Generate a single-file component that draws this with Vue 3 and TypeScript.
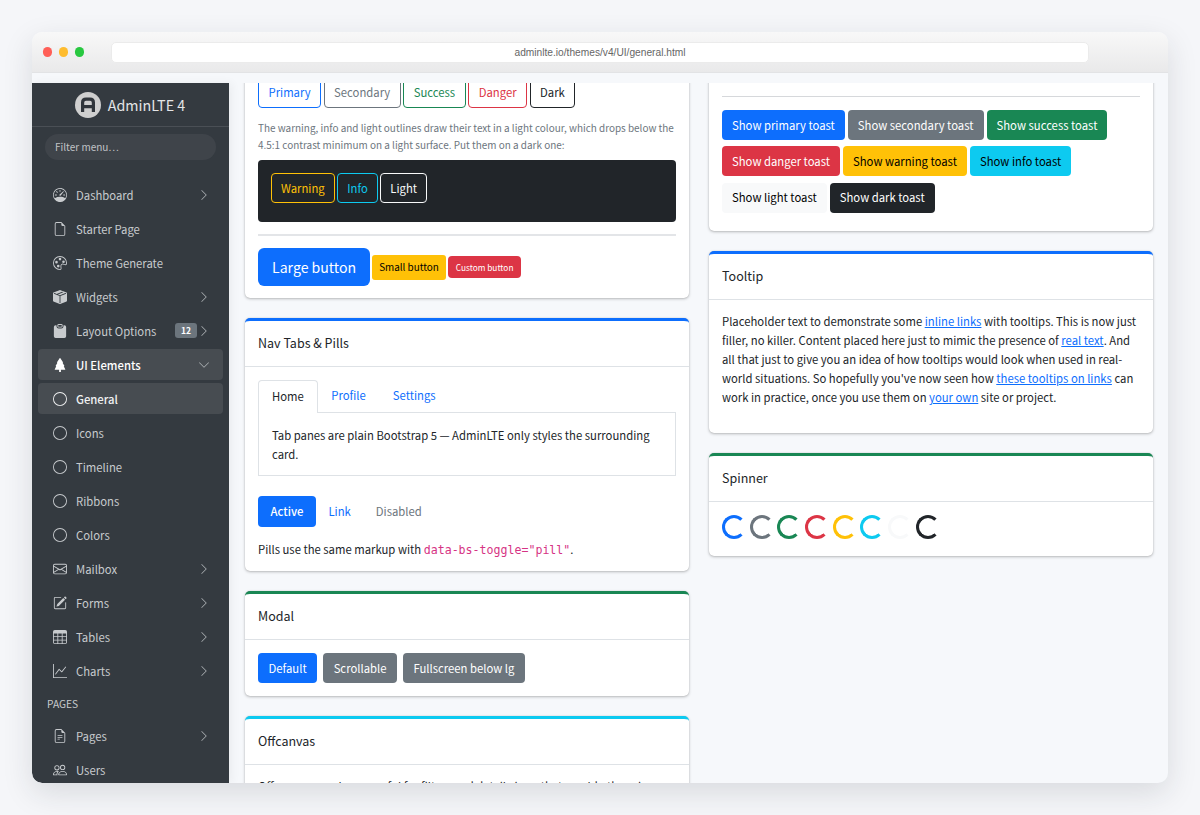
<script setup lang="ts">
const P = {
  speed: ['M8 2a.5.5 0 0 1 .5.5V4a.5.5 0 0 1-1 0V2.5A.5.5 0 0 1 8 2zM3.732 3.732a.5.5 0 0 1 .707 0l.915.914a.5.5 0 1 1-.708.708l-.914-.915a.5.5 0 0 1 0-.707zM2 8a.5.5 0 0 1 .5-.5h1.586a.5.5 0 0 1 0 1H2.5A.5.5 0 0 1 2 8zm9.5 0a.5.5 0 0 1 .5-.5h1.5a.5.5 0 0 1 0 1H12a.5.5 0 0 1-.5-.5zm.754-4.246a.389.389 0 0 0-.527-.02L7.547 7.31A.91.91 0 1 0 8.85 8.569l3.434-4.297a.389.389 0 0 0-.029-.518z', 'M6.664 15.889A8 8 0 1 1 9.336.11a8 8 0 0 1-2.672 15.78zm-4.665-4.283A11.945 11.945 0 0 1 8 10c2.186 0 4.236.585 6.001 1.606a7 7 0 1 0-12.002 0z'],
  file: ['M14 4.5V14a2 2 0 0 1-2 2H4a2 2 0 0 1-2-2V2a2 2 0 0 1 2-2h5.5L14 4.5zm-3 0A1.5 1.5 0 0 1 9.5 3V1H4a1 1 0 0 0-1 1v12a1 1 0 0 0 1 1h8a1 1 0 0 0 1-1V4.5h-2z'],
  palette: ['M8 5a1.5 1.5 0 1 0 0-3 1.5 1.5 0 0 0 0 3zm4 3a1.5 1.5 0 1 0 0-3 1.5 1.5 0 0 0 0 3zM5.5 7a1.5 1.5 0 1 1-3 0 1.5 1.5 0 0 1 3 0zm.5 6a1.5 1.5 0 1 0 0-3 1.5 1.5 0 0 0 0 3z', 'M16 8c0 3.15-1.866 2.585-3.567 2.07C11.42 9.763 10.465 9.473 10 10c-.603.683-.475 1.819-.351 2.92C9.826 14.495 9.996 16 8 16a8 8 0 1 1 8-8zm-8 7c.611 0 .654-.171.655-.176.078-.146.124-.464.07-1.119-.014-.168-.037-.37-.061-.591-.052-.464-.112-1.005-.118-1.462-.01-.707.083-1.61.704-2.314.369-.417.845-.578 1.272-.618.404-.038.812.026 1.16.104.343.077.702.186 1.025.284l.028.008c.346.105.658.199.953.266.653.148.904.083.991.024C14.717 9.38 15 9.161 15 8a7 7 0 1 0-7 7z'],
  box: ['M15.528 2.973a.75.75 0 0 1 .472.696v8.662a.75.75 0 0 1-.472.696l-7.25 2.9a.75.75 0 0 1-.557 0l-7.25-2.9A.75.75 0 0 1 0 12.331V3.669a.75.75 0 0 1 .471-.696L7.443.184l.01-.003.268-.108a.75.75 0 0 1 .558 0l.269.108.01.003 6.97 2.789ZM10.404 2 4.25 4.461 1.846 3.5 1 3.839v.4l6.5 2.6v7.922l.5.2.5-.2V6.84l6.5-2.6v-.4l-.846-.339L8 5.961 5.596 5l6.154-2.461L10.404 2Z'],
  clip: ['M10 1.5a.5.5 0 0 0-.5-.5h-3a.5.5 0 0 0-.5.5v1a.5.5 0 0 0 .5.5h3a.5.5 0 0 0 .5-.5v-1Zm-5 0A1.5 1.5 0 0 1 6.5 0h3A1.5 1.5 0 0 1 11 1.5v1A1.5 1.5 0 0 1 9.5 4h-3A1.5 1.5 0 0 1 5 2.5v-1Zm-2 0h1v1A2.5 2.5 0 0 0 6.5 5h3A2.5 2.5 0 0 0 12 2.5v-1h1a2 2 0 0 1 2 2V14a2 2 0 0 1-2 2H3a2 2 0 0 1-2-2V3.5a2 2 0 0 1 2-2Z'],
  tree: ['M8.416.223a.5.5 0 0 0-.832 0l-3 4.5A.5.5 0 0 0 5 5.5h.098L3.076 8.735A.5.5 0 0 0 3.5 9.5h.191l-1.638 3.276a.5.5 0 0 0 .447.724H7V16h2v-2.5h4.5a.5.5 0 0 0 .447-.724L12.31 9.5h.191a.5.5 0 0 0 .424-.765L10.902 5.5H11a.5.5 0 0 0 .416-.777l-3-4.5z'],
  circle: ['M8 15A7 7 0 1 1 8 1a7 7 0 0 1 0 14zm0 1A8 8 0 1 0 8 0a8 8 0 0 0 0 16z'],
  mail: ['M0 4a2 2 0 0 1 2-2h12a2 2 0 0 1 2 2v8a2 2 0 0 1-2 2H2a2 2 0 0 1-2-2V4Zm2-1a1 1 0 0 0-1 1v.217l7 4.2 7-4.2V4a1 1 0 0 0-1-1H2Zm13 2.383-4.708 2.825L15 11.105V5.383Zm-.034 6.876-5.64-3.471L8 9.583l-1.326-.795-5.64 3.47A1 1 0 0 0 2 13h12a1 1 0 0 0 .966-.741ZM1 11.105l4.708-2.897L1 5.383v5.722Z'],
  pencil: ['M15.502 1.94a.5.5 0 0 1 0 .706L14.459 3.69l-2-2L13.502.646a.5.5 0 0 1 .707 0l1.293 1.293zm-1.75 2.456-2-2L4.939 9.21a.5.5 0 0 0-.121.196l-.805 2.414a.25.25 0 0 0 .316.316l2.414-.805a.5.5 0 0 0 .196-.12l6.813-6.814z', 'M1 13.5A1.5 1.5 0 0 0 2.5 15h11a1.5 1.5 0 0 0 1.5-1.5v-6a.5.5 0 0 0-1 0v6a.5.5 0 0 1-.5.5h-11a.5.5 0 0 1-.5-.5v-11a.5.5 0 0 1 .5-.5H9a.5.5 0 0 0 0-1H2.5A1.5 1.5 0 0 0 1 2.5v11z'],
  table: ['M0 2a2 2 0 0 1 2-2h12a2 2 0 0 1 2 2v12a2 2 0 0 1-2 2H2a2 2 0 0 1-2-2V2zm15 2h-4v3h4V4zm0 4h-4v3h4V8zm0 4h-4v3h3a1 1 0 0 0 1-1v-2zm-5 3v-3H6v3h4zm-5 0v-3H1v2a1 1 0 0 0 1 1h3zm-4-4h4V8H1v3zm0-4h4V4H1v3zm5-3v3h4V4H6zm4 4H6v3h4V8z'],
  graph: ['M0 0h1v15h15v1H0V0Zm14.817 3.113a.5.5 0 0 1 .07.704l-4.5 5.5a.5.5 0 0 1-.74.037L7.06 6.767l-3.656 5.027a.5.5 0 0 1-.808-.588l4-5.5a.5.5 0 0 1 .758-.06l2.609 2.61 4.15-5.073a.5.5 0 0 1 .704-.07Z'],
  text: ['M5.5 7a.5.5 0 0 0 0 1h5a.5.5 0 0 0 0-1h-5zM5 9.5a.5.5 0 0 1 .5-.5h5a.5.5 0 0 1 0 1h-5a.5.5 0 0 1-.5-.5zm0 2a.5.5 0 0 1 .5-.5h2a.5.5 0 0 1 0 1h-2a.5.5 0 0 1-.5-.5z', 'M14 4.5V14a2 2 0 0 1-2 2H4a2 2 0 0 1-2-2V2a2 2 0 0 1 2-2h5.5L14 4.5zm-3 0A1.5 1.5 0 0 1 9.5 3V1H4a1 1 0 0 0-1 1v12a1 1 0 0 0 1 1h8a1 1 0 0 0 1-1V4.5h-2z'],
  people: ['M15 14s1 0 1-1-1-4-5-4-5 3-5 4 1 1 1 1h8Zm-7.978-1A.261.261 0 0 1 7 12.996c.001-.264.167-1.03.76-1.72C8.312 10.629 9.282 10 11 10c1.717 0 2.687.63 3.24 1.276.593.69.758 1.457.76 1.72l-.008.002a.274.274 0 0 1-.014.002H7.022ZM11 7a2 2 0 1 0 0-4 2 2 0 0 0 0 4Zm3-2a3 3 0 1 1-6 0 3 3 0 0 1 6 0ZM6.936 9.28a5.88 5.88 0 0 0-1.23-.247A7.35 7.35 0 0 0 5 9c-4 0-5 3-5 4 0 .667.333 1 1 1h4.216A2.238 2.238 0 0 1 5 13c0-1.01.377-2.042 1.09-2.904.243-.294.526-.569.846-.816ZM4.92 10A5.493 5.493 0 0 0 4 13H1c0-.26.164-1.03.76-1.724.545-.636 1.492-1.256 3.16-1.275ZM1.5 5.5a3 3 0 1 1 6 0 3 3 0 0 1-6 0Zm3-2a2 2 0 1 0 0 4 2 2 0 0 0 0-4Z'],
}
const chevR = 'M4.646 1.646a.5.5 0 0 1 .708 0l6 6a.5.5 0 0 1 0 .708l-6 6a.5.5 0 0 1-.708-.708L10.293 8 4.646 2.354a.5.5 0 0 1 0-.708z'
const chevD = 'M1.646 4.646a.5.5 0 0 1 .708 0L8 10.293l5.646-5.647a.5.5 0 0 1 .708.708l-6 6a.5.5 0 0 1-.708 0l-6-6a.5.5 0 0 1 0-.708z'

type Item = { label: string; icon?: string[]; chev?: 'r' | 'd'; badge?: string; open?: boolean; active?: boolean; header?: boolean }
const menu: Item[] = [
  { label: 'Dashboard', icon: P.speed, chev: 'r' },
  { label: 'Starter Page', icon: P.file },
  { label: 'Theme Generate', icon: P.palette },
  { label: 'Widgets', icon: P.box, chev: 'r' },
  { label: 'Layout Options', icon: P.clip, chev: 'r', badge: '12' },
  { label: 'UI Elements', icon: P.tree, chev: 'd', open: true },
  { label: 'General', icon: P.circle, active: true },
  { label: 'Icons', icon: P.circle },
  { label: 'Timeline', icon: P.circle },
  { label: 'Ribbons', icon: P.circle },
  { label: 'Colors', icon: P.circle },
  { label: 'Mailbox', icon: P.mail, chev: 'r' },
  { label: 'Forms', icon: P.pencil, chev: 'r' },
  { label: 'Tables', icon: P.table, chev: 'r' },
  { label: 'Charts', icon: P.graph, chev: 'r' },
  { label: 'PAGES', header: true },
  { label: 'Pages', icon: P.text, chev: 'r' },
  { label: 'Users', icon: P.people },
]
const outline = [
  { t: 'Primary', c: 'o-primary' }, { t: 'Secondary', c: 'o-secondary' }, { t: 'Success', c: 'o-success' },
  { t: 'Danger', c: 'o-danger' }, { t: 'Dark', c: 'o-dark' },
]
const darkOutline = [{ t: 'Warning', c: 'o-warning' }, { t: 'Info', c: 'o-info' }, { t: 'Light', c: 'o-light' }]
const toasts = [
  { t: 'Show primary toast', c: 'b-primary' }, { t: 'Show secondary toast', c: 'b-secondary' }, { t: 'Show success toast', c: 'b-success' },
  { t: 'Show danger toast', c: 'b-danger' }, { t: 'Show warning toast', c: 'b-warning' }, { t: 'Show info toast', c: 'b-info' },
  { t: 'Show light toast', c: 'b-light' }, { t: 'Show dark toast', c: 'b-dark' },
]
const spinners = ['#0d6efd', '#6c757d', '#198754', '#dc3545', '#ffc107', '#0dcaf0', '#f8f9fa', '#212529']
</script>

<template>
  <div class="stage">
    <div class="window">
      <div class="chrome">
        <div class="dots"><i class="red"></i><i class="yellow"></i><i class="green"></i></div>
        <div class="url">adminlte.io/themes/v4/UI/general.html</div>
      </div>
      <div class="strip"></div>
      <div class="page">
        <aside class="sidebar">
          <div class="brand">
            <svg class="logo" viewBox="0 0 26 26">
              <circle cx="13" cy="13" r="13" fill="#cfcfcf" />
              <path d="M7.6 20V10.5Q7.6 7.2 11 7.2H15Q18.4 7.2 18.4 10.5V20M7.6 14.6H18.4" fill="none" stroke="#30353b" stroke-width="3.2" />
            </svg>
            <span>AdminLTE 4</span>
          </div>
          <div class="filter">Filter menu…</div>
          <nav class="menu">
            <template v-for="m in menu" :key="m.label">
              <div v-if="m.header" class="menu-head">{{ m.label }}</div>
              <div v-else class="item" :class="{ open: m.open, active: m.active }">
                <svg class="ico" viewBox="0 0 16 16" fill="currentColor"><path v-for="d in m.icon" :key="d" :d="d" /></svg>
                <span class="lbl">{{ m.label }}</span>
                <span v-if="m.badge" class="badge">{{ m.badge }}</span>
                <svg v-if="m.chev" class="chev" viewBox="0 0 16 16" fill="currentColor"><path :d="m.chev === 'r' ? chevR : chevD" /></svg>
              </div>
            </template>
          </nav>
        </aside>
        <main class="main">
          <div class="col">
            <section class="card clipped">
              <div class="body first-left">
                <div class="btns">
                  <span v-for="b in outline" :key="b.t" class="btn outline" :class="b.c">{{ b.t }}</span>
                </div>
                <p class="muted">The warning, info and light outlines draw their text in a light colour, which drops below the 4.5:1 contrast minimum on a light surface. Put them on a dark one:</p>
                <div class="darkbox">
                  <span v-for="b in darkOutline" :key="b.t" class="btn outline" :class="b.c">{{ b.t }}</span>
                </div>
                <hr class="rule" />
                <div class="btns center">
                  <span class="btn b-primary lg">Large button</span>
                  <span class="btn b-warning sm">Small button</span>
                  <span class="btn b-danger xs">Custom button</span>
                </div>
              </div>
            </section>

            <section class="card top-primary">
              <header class="head">Nav Tabs &amp; Pills</header>
              <div class="body tabs-body">
                <div class="tabs">
                  <span class="tab current">Home</span>
                  <span class="tab">Profile</span>
                  <span class="tab">Settings</span>
                </div>
                <div class="pane">Tab panes are plain Bootstrap 5 — AdminLTE only styles the surrounding card.</div>
                <div class="pills">
                  <span class="pill on">Active</span>
                  <span class="pill">Link</span>
                  <span class="pill off">Disabled</span>
                </div>
                <p class="plain">Pills use the same markup with <code>data-bs-toggle="pill"</code>.</p>
              </div>
            </section>

            <section class="card top-success">
              <header class="head">Modal</header>
              <div class="body">
                <div class="btns wide">
                  <span class="btn b-primary">Default</span>
                  <span class="btn b-secondary">Scrollable</span>
                  <span class="btn b-secondary">Fullscreen below lg</span>
                </div>
              </div>
            </section>

            <section class="card top-info">
              <header class="head">Offcanvas</header>
              <div class="body off-body">
                <p class="plain">Offcanvas panels are useful for filters and detail views that would otherwise clutter.</p>
              </div>
            </section>
          </div>

          <div class="col">
            <section class="card clipped">
              <div class="body first-right">
                <hr class="rule thin" />
                <div class="toasts">
                  <span v-for="b in toasts" :key="b.t" class="btn" :class="b.c">{{ b.t }}</span>
                </div>
              </div>
            </section>

            <section class="card top-primary">
              <header class="head">Tooltip</header>
              <div class="body tip">
                Placeholder text to demonstrate some <a>inline links</a> with tooltips. This is now just filler, no killer. Content placed here just to mimic the presence of <a>real text</a>. And all that just to give you an idea of how tooltips would look when used in real-world situations. So hopefully you've now seen how <a>these tooltips on links</a> can work in practice, once you use them on <a>your own</a> site or project.
              </div>
            </section>

            <section class="card top-success">
              <header class="head">Spinner</header>
              <div class="body spin-row">
                <span v-for="c in spinners" :key="c" class="spinner" :style="{ borderColor: c, borderRightColor: 'transparent' }"></span>
              </div>
            </section>
          </div>
        </main>
      </div>
    </div>
  </div>
</template>

<style>
html, body { margin: 0; background: #f4f5f8; }
</style>

<style scoped>
.stage { box-sizing: border-box; width: 1200px; height: 815px; padding: 32px; overflow: hidden; background: #f5f6f9; font-family: "Noto Sans CJK SC", "Noto Sans", sans-serif; font-size: 11.3px; color: #212529; }
.window { width: 1136px; height: 751px; display: flex; flex-direction: column; border-radius: 10px; overflow: hidden; background: #f6f8fb; box-shadow: 0 10px 30px rgba(30, 35, 45, .13); }
.chrome { flex: none; height: 40px; display: flex; align-items: center; padding-left: 10.5px; background: linear-gradient(#f8f8f8, #e9e9ea); border-bottom: 1px solid #e2e3e5; }
.dots { display: flex; gap: 6.5px; width: 68.5px; }
.dots i { width: 9.5px; height: 9.5px; border-radius: 50%; }
.red { background: #ff5f57; }
.yellow { background: #febc2e; }
.green { background: #28c840; }
.url { width: 978px; height: 21px; border-radius: 5px; background: #fff; border: 1px solid #ebebeb; box-sizing: border-box; display: flex; align-items: center; justify-content: center; font: 10.2px "Liberation Sans", sans-serif; color: #666; }
.strip { flex: none; height: 10px; }
.page { flex: 1; min-height: 0; display: flex; }

.sidebar { flex: none; width: 197px; background: #343a40; color: #c8cbce; overflow: hidden; border-bottom-left-radius: 10px; box-shadow: 3px 0 10px rgba(0,0,0,.05); }
.brand { height: 43px; display: flex; align-items: center; justify-content: center; gap: 7px; padding-right: 1px; font-size: 14.3px; color: #e4e5e7; border-bottom: 1px solid #4a4f55; }
.logo { width: 26px; height: 26px; }
.filter { margin: 7px 13px 0; height: 26px; border-radius: 13px; background: #3f444a; padding-left: 10px; line-height: 25px; font-size: 10px; color: #c0c3c6; }
.menu { margin-top: 19px; padding: 0 6px; display: flex; flex-direction: column; gap: 3px; }
.item { height: 31px; flex: none; border-radius: 4px; display: flex; align-items: center; padding: 0 13px 0 15px; }
.ico { width: 14px; height: 14px; flex: none; margin-right: 9px; }
.lbl { flex: 1; white-space: nowrap; }
.chev { width: 12px; height: 12px; flex: none; color: #aeb2b5; }
.open, .active { background: #474c51; color: #fff; font-weight: 500; }
.active { color: #f0f1f2; }
.badge { width: 22px; height: 15px; margin-right: 1px; border-radius: 3px; background: #6c757d; color: #fff; font-size: 8.5px; font-weight: 700; text-align: center; line-height: 15px; }
.menu-head { height: 28px; padding-left: 9px; line-height: 29px; font-size: 10.2px; color: #c8cbce; flex: none; }

.main { flex: 1; min-width: 0; display: flex; gap: 20px; padding: 0 16px; overflow: hidden; }
.col { width: 444px; flex: none; display: flex; flex-direction: column; gap: 20px; }
.card { flex: none; background: #fff; border-radius: 5px; box-shadow: 0 0 1px rgba(0,0,0,.2), 0 1px 3px rgba(0,0,0,.25); }
.clipped { margin-top: -10px; }
.top-primary { border-top: 3px solid #0d6efd; }
.top-success { border-top: 3px solid #198754; }
.top-info { border-top: 3px solid #0dcaf0; }
.head { height: 43px; padding: 0 13px 2px; display: flex; align-items: center; font-size: 12.5px; border-bottom: 1px solid #dee2e6; }
.body { padding: 13px; }
.first-left { padding-top: 4px; padding-bottom: 12px; }
.first-right { padding-top: 23px; padding-bottom: 18.5px; }
.tabs-body { padding-bottom: 11.5px; }
.off-body { padding-top: 12px; }

.btns { display: flex; gap: 2.5px; }
.btns.center { align-items: center; gap: 2px; }
.btns.wide { gap: 6px; }
.btn { display: inline-flex; align-items: center; height: 30px; box-sizing: border-box; padding: 0 9px 1px; border-radius: 4px; white-space: nowrap; border: 1px solid transparent; }
.btns .outline, .btns.wide .btn { padding: 0 9.5px 1px; }
.outline { height: 31px; background: transparent; }
.o-primary { color: #0d6efd; border-color: #0d6efd; }
.o-secondary { color: #6c757d; border-color: #6c757d; }
.o-success { color: #198754; border-color: #198754; }
.o-danger { color: #dc3545; border-color: #dc3545; }
.o-dark { color: #212529; border-color: #212529; }
.o-warning { color: #ffc107; border-color: #ffc107; height: 30px; }
.o-info { color: #0dcaf0; border-color: #0dcaf0; height: 30px; }
.o-light { color: #f8f9fa; border-color: #f8f9fa; height: 30px; }
.muted { margin: 11px 0 7px; color: #6c757d; font-size: 9.95px; line-height: 17px; }
.darkbox { height: 62px; box-sizing: border-box; background: #212529; border-radius: 4px; display: flex; align-items: flex-start; gap: 2.5px; padding: 13px; }
.rule { height: 2px; border: 0; background: #e3e5e8; margin: 12px 0; }
.rule.thin { height: 1px; background: #d6d8db; margin: 0 0 13px; }
.b-primary { background: #0d6efd; color: #fff; }
.b-secondary { background: #6c757d; color: #fff; }
.b-success { background: #198754; color: #fff; }
.b-danger { background: #dc3545; color: #fff; }
.b-warning { background: #ffc107; color: #000; }
.b-info { background: #0dcaf0; color: #000; }
.b-light { background: #f8f9fa; color: #000; }
.b-dark { background: #212529; color: #fff; }
.lg { height: 38px; padding: 0 13px 1px; font-size: 14.1px; border-radius: 6px; }
.sm { height: 25px; padding: 0 6px 1px; font-size: 9.9px; border-radius: 3px; }
.xs { height: 22px; padding: 0 7px 1px; font-size: 8.3px; border-radius: 4px; }

.tabs { display: flex; height: 32px; position: relative; }
.tab { padding: 0 13.5px; line-height: 31px; color: #0d6efd; }
.tab.current { color: #212529; background: #fff; border: 1px solid #dee2e6; border-bottom: 0; border-radius: 4px 4px 0 0; padding: 0 13px; margin-bottom: -1px; z-index: 1; }
.pane { height: 64px; box-sizing: border-box; border: 1px solid #dee2e6; padding: 13px 13px 0; line-height: 19px; }
.pills { display: flex; margin-top: 20px; height: 31px; align-items: center; }
.pill { height: 31px; line-height: 30px; padding: 0 12.5px; border-radius: 4px; color: #0d6efd; }
.pill.on { background: #0d6efd; color: #fff; font-weight: 500; }
.pill.off { color: #6c757d; }
.plain { margin: 12.5px 0 0; line-height: 19px; }
.off-body .plain { margin: 0; }
code { font-family: "DejaVu Sans Mono", "Liberation Mono", monospace; font-size: 11.6px; color: #d63384; }

.toasts { display: flex; flex-wrap: wrap; column-gap: 3px; row-gap: 6.3px; }
.tip { padding-top: 12px; padding-bottom: 26px; line-height: 19px; }
.tip a { color: #0d6efd; text-decoration: underline; }
.spin-row { display: flex; gap: 3.7px; padding-top: 13px; padding-bottom: 17px; }
.spinner { width: 24px; height: 24px; box-sizing: border-box; border: 3px solid; border-radius: 50%; }
</style>
